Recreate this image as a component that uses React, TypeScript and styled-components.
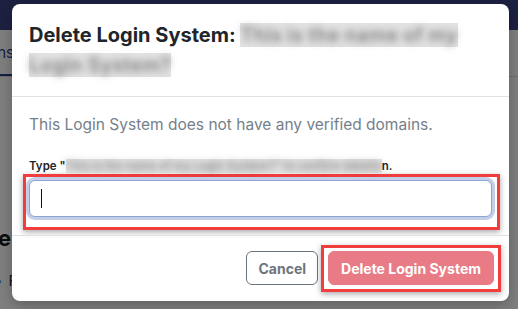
import styled, { createGlobalStyle } from "styled-components";

const GlobalStyle = createGlobalStyle`
    html, body {
        margin: 0;
        padding: 0;
        width: 518px;
        height: 309px;
        overflow: hidden;
        background: #ffffff;
        font-family: Inter, "Noto Sans", sans-serif;
    }
`;

// page behind the dialog
const Page = styled.div`
    width: 518px;
    height: 309px;
    position: relative;
    overflow: hidden;
`;

const NavBar = styled.div`
    height: 30px;
    background: #3b4283;
`;

const Tabs = styled.div`
    display: flex;
    align-items: flex-end;
    height: 46px;
    border-bottom: 1px solid #dcdcdc;
    margin-left: -90px;
`;

const Tab = styled.div<{ $active?: boolean }>`
    width: 104px;
    text-align: right;
    padding: 0 0 12px;
    font-size: 15px;
    color: ${(p) => (p.$active ? "#2c3e8c" : "#555")};
    border-bottom: 2px solid ${(p) => (p.$active ? "#2c3e8c" : "transparent")};
`;

const PageHeading = styled.h2`
    width: 300px;
    text-align: right;
    margin: 148px 0 0 -289px;
    font-size: 22px;
    font-weight: 700;
    color: #1a1a1a;
    white-space: nowrap;
`;

const PageLine = styled.div`
    margin: 20px 0 0 -6px;
    font-size: 15px;
    color: #333;
    span {
        color: #2c3e8c;
        margin-right: 6px;
    }
`;

const Backdrop = styled.div`
    position: absolute;
    inset: 0;
    background: rgba(0, 0, 0, 0.5);
`;

// dialog
const Dialog = styled.div`
    position: absolute;
    left: 12px;
    top: 4px;
    width: 497px;
    height: 297px;
    background: #fff;
    border-radius: 8px;
    box-shadow: 0 4px 14px rgba(0, 0, 0, 0.25);
    display: flex;
    flex-direction: column;
    box-sizing: border-box;
`;

const Header = styled.div`
    padding: 16px 17px;
    border-bottom: 1px solid #dee2e6;
`;

const Title = styled.h1`
    margin: 0;
    max-width: 432px;
    font-size: 20px;
    line-height: 30px;
    font-weight: 700;
    color: #212529;
`;

// redacted text: grey box with smeared letters
const Blur = styled.span`
    background: #e3e3e3;
    color: transparent;
    text-shadow: 0 0 7px rgba(90, 90, 90, 0.7);
    font-weight: 600;
    -webkit-box-decoration-break: clone;
    box-decoration-break: clone;
`;

const Body = styled.div`
    padding: 17px 17px 18px;
    flex: 1;
`;

const Message = styled.p`
    margin: 0 0 21px;
    font-size: 15.5px;
    line-height: 22px;
    color: #76808a;
`;

const Label = styled.label`
    display: block;
    font-size: 11.5px;
    line-height: 18px;
    font-weight: 600;
    color: #212529;
    margin-bottom: 5px;
`;

const Highlight = styled.div<{ $m: string; $p: string }>`
    border: 3px solid #f23d3d;
    padding: ${(p) => p.$p};
    margin: ${(p) => p.$m};
    box-shadow: 0 2px 6px rgba(0, 0, 0, 0.35);
`;

const InputWrap = styled.div`
    position: relative;
`;

const Input = styled.input`
    display: block;
    width: 100%;
    box-sizing: border-box;
    height: 37px;
    border: 1px solid #8ea4d2;
    border-radius: 6px;
    box-shadow: 0 0 0 3px #c3cfe8;
    outline: none;
    padding: 0 12px;
    font-size: 15px;
    font-family: inherit;
`;

const Caret = styled.span`
    position: absolute;
    left: 12px;
    top: 9px;
    width: 1px;
    height: 19px;
    background: #111;
`;

const Footer = styled.div`
    display: flex;
    justify-content: flex-end;
    align-items: center;
    gap: 10px;
    padding: 15px 15px 16px;
    border-top: 1px solid #dee2e6;
`;

const Button = styled.button<{ $danger?: boolean }>`
    height: 34px;
    padding: 0 ${(p) => (p.$danger ? "12px" : "11px")};
    border-radius: 6px;
    font-family: inherit;
    font-size: 14px;
    font-weight: 700;
    border: 1px solid ${(p) => (p.$danger ? "#dc3545" : "#6c757d")};
    background: ${(p) => (p.$danger ? "#dc3545" : "#fff")};
    color: ${(p) => (p.$danger ? "#fff" : "#6c757d")};
    opacity: ${(p) => (p.$danger ? 0.65 : 1)};
    white-space: nowrap;
`;

function App() {
    return (
        <>
            <GlobalStyle />
            <Page>
                <NavBar />
                <Tabs>
                    <Tab $active>Connections</Tab>
                </Tabs>
                <PageHeading>Delete Login Service</PageHeading>
                <PageLine>
                    <span>•</span>F
                </PageLine>
                <Backdrop />
                <Dialog>
                    <Header>
                        <Title>
                            Delete Login System: <Blur>This is the name of my Login System?</Blur>
                        </Title>
                    </Header>
                    <Body>
                        <Message>This Login System does not have any verified domains.</Message>
                        <Label>
                            Type "<Blur>This is the name of my Login System?" to confirm deletio</Blur>n.
                        </Label>
                        <Highlight $m="-6px -8px -13px -6px" $p="3px 5px 10px 3px">
                            <InputWrap>
                                <Input aria-label="Confirm name" />
                                <Caret />
                            </InputWrap>
                        </Highlight>
                    </Body>
                    <Footer>
                        <Button>Cancel</Button>
                        <Highlight $m="-6px -7px -7px -7px" $p="3px 4px 4px 4px">
                            <Button $danger disabled>
                                Delete Login System
                            </Button>
                        </Highlight>
                    </Footer>
                </Dialog>
            </Page>
        </>
    );
}

export default App;
